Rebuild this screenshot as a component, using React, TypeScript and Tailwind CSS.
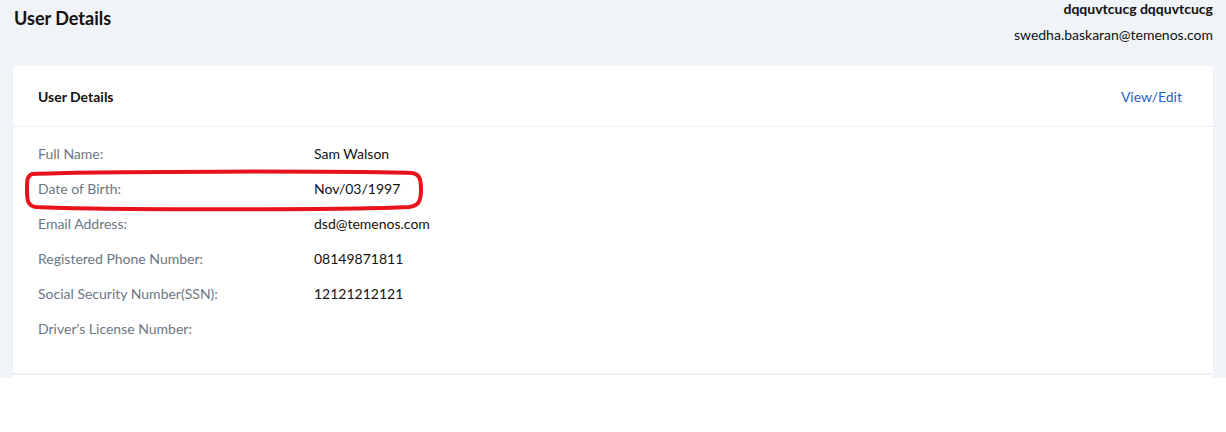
import React from "react";

const rows: { label: string; value: string }[] = [
  { label: "Full Name:", value: "Sam Walson" },
  { label: "Date of Birth:", value: "Nov/03/1997" },
  { label: "Email Address:", value: "dsd@temenos.com" },
  { label: "Registered Phone Number:", value: "08149871811" },
  { label: "Social Security Number(SSN):", value: "12121212121" },
  { label: "Driver's License Number:", value: "" },
];

export default function App() {
  return (
    <div className="min-h-[432px] bg-white font-['Lato','Noto_Sans',sans-serif]">
      <div className="relative h-[378px] overflow-hidden bg-[#f0f3f7] px-[13px]">
        <div className="flex items-start justify-between">
          <h1 className="pl-px pt-[6px] text-[18px] font-bold leading-[24px] text-[#111]">User Details</h1>
          <div className="text-right text-[14px] leading-[18px] text-[#111]">
            <div className="font-bold">dqquvtcucg dqquvtcucg</div>
            <div className="mt-[8px]">swedha.baskaran@temenos.com</div>
          </div>
        </div>

        <div className="mt-[22px] rounded-[4px] bg-white shadow-[0_1px_2px_rgba(0,0,0,0.06)]">
          <div className="flex h-[61px] items-center justify-between border-b border-[#eceef1] pl-[25px] pr-[31px]">
            <span className="text-[14px] font-bold text-[#111]">User Details</span>
            <a className="text-[14px] text-[#1f5fbf]">View/Edit</a>
          </div>
          <div className="pb-[27px] pl-[25px] pt-[9px]">
            {rows.map((r) => (
              <div key={r.label} className="flex h-[35px] items-center text-[14px]">
                <span className="w-[276px] text-[#6b7785]">{r.label}</span>
                <span className="text-[#111]">{r.value}</span>
              </div>
            ))}
          </div>
          <div className="h-[60px] border-t-2 border-[#eef0f4]" />
        </div>

        <svg
          className="pointer-events-none absolute left-[24px] top-[168px]"
          width="400"
          height="44"
          viewBox="0 0 400 44"
        >
          <path
            d="M8 6 C 60 3, 330 3, 388 5 C 396 6, 397 12, 397 22 C 397 34, 394 38, 385 39 C 320 42, 70 42, 12 39 C 4 38, 3 33, 3 22 C 3 12, 3 8, 8 6 Z"
            fill="none"
            stroke="#e8131c"
            strokeWidth="4"
          />
        </svg>
      </div>
    </div>
  );
}
